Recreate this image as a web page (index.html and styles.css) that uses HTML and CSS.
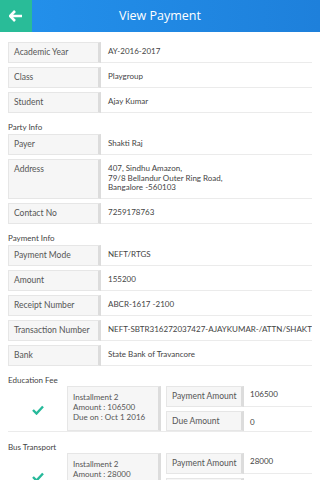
FILE: index.html
```html
<!DOCTYPE html>
<html>
<head>
<meta charset="utf-8">
<link rel="stylesheet" href="styles.css">
</head>
<body>
<div class="header">
  <div class="back">
    <svg width="14" height="12" viewBox="0 0 14 12"><path d="M6 1 L1 6 L6 11 M1 6 H13" stroke="#fff" stroke-width="2.6" fill="none" stroke-linejoin="miter"/></svg>
  </div>
  <div class="title">View Payment</div>
</div>
<div class="content">
  <div class="row"><div class="label">Academic Year</div><div class="value">AY-2016-2017</div></div>
  <div class="row"><div class="label">Class</div><div class="value">Playgroup</div></div>
  <div class="row"><div class="label">Student</div><div class="value">Ajay Kumar</div></div>

  <div class="section">Party Info</div>
  <div class="row"><div class="label">Payer</div><div class="value">Shakti Raj</div></div>
  <div class="row tall"><div class="label">Address</div><div class="value">407, Sindhu Amazon,<br>79/8 Bellandur Outer Ring Road,<br>Bangalore -560103</div></div>
  <div class="row"><div class="label">Contact No</div><div class="value">7259178763</div></div>

  <div class="section">Payment Info</div>
  <div class="row"><div class="label">Payment Mode</div><div class="value">NEFT/RTGS</div></div>
  <div class="row"><div class="label">Amount</div><div class="value">155200</div></div>
  <div class="row"><div class="label">Receipt Number</div><div class="value">ABCR-1617 -2100</div></div>
  <div class="row"><div class="label">Transaction Number</div><div class="value clip">NEFT-SBTR316272037427-AJAYKUMAR-/ATTN/SHAKTI</div></div>
  <div class="row"><div class="label">Bank</div><div class="value">State Bank of Travancore</div></div>

  <div class="section fee">Education Fee</div>
  <div class="group">
    <div class="check"><svg width="12" height="10" viewBox="0 0 12 10"><path d="M1 5 L4.5 8.5 L11 1.5" stroke="#26b99a" stroke-width="2.4" fill="none"/></svg></div>
    <div class="inst">Installment 2<br>Amount : 106500<br>Due on : Oct 1 2016</div>
    <div class="amounts">
      <div class="arow"><div class="alabel">Payment Amount</div><div class="avalue top">106500</div></div>
      <div class="arow"><div class="alabel">Due Amount</div><div class="avalue bot">0</div></div>
    </div>
  </div>

  <div class="section fee">Bus Transport</div>
  <div class="group">
    <div class="check"><svg width="12" height="10" viewBox="0 0 12 10"><path d="M1 5 L4.5 8.5 L11 1.5" stroke="#26b99a" stroke-width="2.4" fill="none"/></svg></div>
    <div class="inst">Installment 2<br>Amount : 28000<br>Due on : Oct 1 2016</div>
    <div class="amounts">
      <div class="arow"><div class="alabel">Payment Amount</div><div class="avalue top">28000</div></div>
      <div class="arow"><div class="alabel">Due Amount</div><div class="avalue bot">0</div></div>
    </div>
  </div>
</div>
</body>
</html>
```

FILE: styles.css
```css
* { box-sizing: border-box; }
html, body { margin: 0; padding: 0; }
body {
  width: 320px;
  height: 480px;
  overflow: hidden;
  background: #fff;
  font-family: Lato, "Open Sans", sans-serif;
  color: #444;
}
.header {
  display: flex;
  height: 32px;
  background: linear-gradient(90deg, #2391ec 0%, #1e80db 100%);
}
.back {
  width: 32px;
  height: 32px;
  background: #29bc98;
  display: flex;
  align-items: center;
  justify-content: center;
}
.title {
  flex: 1;
  color: #fff;
  font-size: 12.5px;
  line-height: 32px;
  text-align: center;
  padding-right: 32px;
  font-family: "Open Sans", sans-serif;
}
.content {
  padding: 10px 8px 0 8px;
}
.row {
  display: flex;
  height: 21px;
  margin-bottom: 4px;
}
.row.tall { height: 40px; }
.label {
  width: 93px;
  flex: none;
  background: #f6f6f6;
  border: 1px solid #e6e6e6;
  border-right: 3px solid #dcdcdc;
  padding-left: 5px;
  font-size: 8.5px;
  line-height: 19px;
  color: #555;
}
.value {
  flex: 1;
  border-bottom: 1px solid #ebebeb;
  padding-left: 7px;
  font-size: 8px;
  line-height: 18px;
  color: #444;
  white-space: nowrap;
  overflow: hidden;
}
.tall .value { line-height: 9.5px; padding-top: 5px; }
.section {
  font-size: 8px;
  color: #444;
  padding-top: 5px;
  height: 17px;
  line-height: 10px;
}
.section.fee { height: 16px; }
.group {
  display: flex;
  height: 46px;
  border-bottom: 1px solid #ebebeb;
  margin-bottom: 5px;
}
.check {
  width: 59px;
  flex: none;
  display: flex;
  align-items: center;
  justify-content: center;
  padding-top: 2px;
}
.inst {
  width: 94px;
  flex: none;
  background: #f6f6f6;
  border: 1px solid #e6e6e6;
  border-right: 3px solid #dcdcdc;
  padding: 5px 0 0 5px;
  font-size: 8px;
  line-height: 10px;
  color: #555;
}
.amounts {
  flex: 1;
  display: flex;
  flex-direction: column;
  padding-left: 5px;
}
.arow {
  display: flex;
  height: 21px;
  margin-bottom: 4px;
}
.arow + .arow { margin-bottom: 0; height: 20px; }
.alabel {
  width: 78px;
  flex: none;
  background: #f6f6f6;
  border: 1px solid #e6e6e6;
  border-right: 3px solid #dcdcdc;
  padding-left: 5px;
  font-size: 8.5px;
  line-height: 19px;
  color: #555;
}
.avalue {
  flex: 1;
  padding-left: 6px;
  font-size: 8px;
  color: #444;
}
.avalue.top { border-bottom: 1px solid #ebebeb; line-height: 16px; }
.avalue.bot { line-height: 22px; }
```
